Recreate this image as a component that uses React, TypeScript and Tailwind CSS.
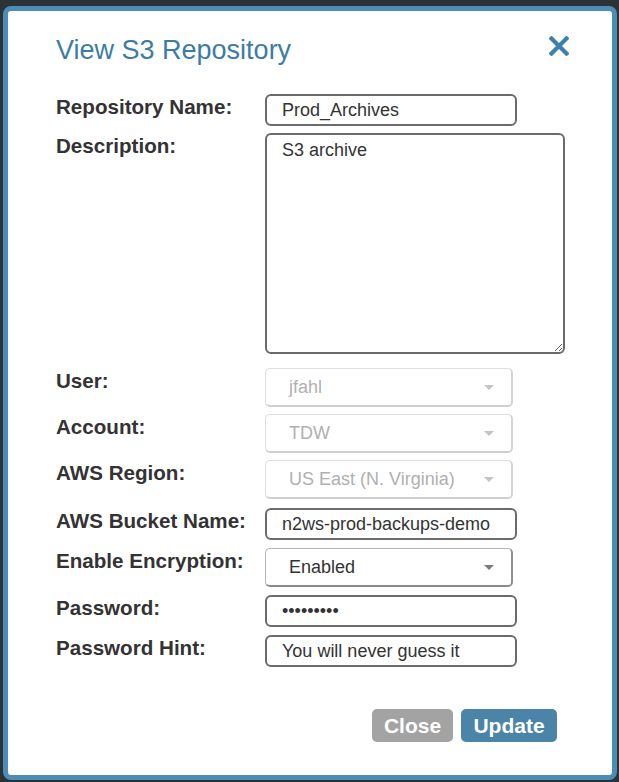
import React from "react";

const font = { fontFamily: '"Liberation Sans", Arial, Helvetica, sans-serif' };

function Caret({ color }: { color: string }) {
  return (
    <svg width="10" height="5" viewBox="0 0 10 5" className="shrink-0">
      <path d="M0 0 L10 0 L5 5 Z" fill={color} />
    </svg>
  );
}

function Row({
  label,
  children,
  className,
}: {
  label: string;
  children: React.ReactNode;
  className?: string;
}) {
  return (
    <div className={"flex items-start " + (className || "")}>
      <div className="w-[209px] shrink-0 pt-[1px] text-[20.6px] leading-[23px] font-bold text-[#333333]">
        {label}
      </div>
      {children}
    </div>
  );
}

function TextBox({ value }: { value: string }) {
  return (
    <div className="w-[252px] h-[32px] border-2 border-[#6b6b6b] rounded-[6px] pl-[15px] flex items-center text-[18px] leading-[20px] text-[#333333] bg-white">
      <span>{value}</span>
    </div>
  );
}

function DisabledSelect({ value }: { value: string }) {
  return (
    <div className="w-[248px] h-[39px] rounded-[5px] border border-[#dedede] border-b-[2px] border-r-[2px] border-b-[#cfcfcf] border-r-[#d4d4d4] pl-[23px] pr-[17px] flex items-center justify-between text-[18px] text-[#b0b0b0] bg-white">
      <span>{value}</span>
      <Caret color="#c4c4c4" />
    </div>
  );
}

export default function App() {
  return (
    <div className="w-[619px] h-[782px] bg-[#2b3336] pt-[6px] pl-[3px] pr-[2px] pb-[2px]" style={font}>
      <div className="h-[774px] border-[5px] border-[#4a8eb7] rounded-[8px] bg-white flex flex-col">
        <div className="flex items-start justify-between pl-[48px] pr-[43px] pt-[24px]">
          <h1 className="text-[27px] leading-[31px] text-[#3b7ca6] font-normal">View S3 Repository</h1>
          <svg width="20" height="20" viewBox="0 0 20 20" className="mt-[1px]">
            <path d="M2.5 2.5 L17.5 17.5 M17.5 2.5 L2.5 17.5" stroke="#3d80ab" strokeWidth="4.2" strokeLinecap="square" />
          </svg>
        </div>

        <div className="pl-[48px] mt-[28px] flex flex-col">
          <Row label="Repository Name:">
            <TextBox value="Prod_Archives" />
          </Row>
          <Row label="Description:" className="mt-[7px]">
            <textarea
              readOnly
              defaultValue="S3 archive"
              className="w-[300px] h-[221px] border-2 border-[#6b6b6b] rounded-[6px] px-[15px] pt-[4px] text-[18px] leading-[22px] text-[#333333] outline-none bg-white"
              style={font}
            />
          </Row>
          <Row label="User:" className="mt-[14px]">
            <DisabledSelect value="jfahl" />
          </Row>
          <Row label="Account:" className="mt-[7px]">
            <DisabledSelect value="TDW" />
          </Row>
          <Row label="AWS Region:" className="mt-[7px]">
            <DisabledSelect value="US East (N. Virginia)" />
          </Row>
          <Row label="AWS Bucket Name:" className="mt-[9px]">
            <TextBox value="n2ws-prod-backups-demo" />
          </Row>
          <Row label="Enable Encryption:" className="mt-[8px]">
            <div className="w-[248px] h-[39px] rounded-[5px] border border-[#b5b5b5] border-b-[2px] border-r-[2px] border-b-[#8a8a8a] border-r-[#8f8f8f] pl-[23px] pr-[17px] flex items-center justify-between text-[18px] text-[#333333] bg-white">
              <span>Enabled</span>
              <Caret color="#7a7a7a" />
            </div>
          </Row>
          <Row label="Password:" className="mt-[8px]">
            <div className="w-[252px] h-[32px] border-2 border-[#6b6b6b] rounded-[6px] pl-[15px] flex items-center text-[18px] leading-[20px] text-[#333333] bg-white">
              <span className="tracking-[0px]">•••••••••</span>
            </div>
          </Row>
          <Row label="Password Hint:" className="mt-[8px]">
            <TextBox value="You will never guess it" />
          </Row>
        </div>

        <div className="flex justify-end gap-[8px] pr-[55px] mt-[42px]">
          <button className="w-[81px] h-[33px] rounded-[5px] bg-[#a3a3a3] text-white font-bold text-[21px] leading-[23px]" style={font}>
            Close
          </button>
          <button className="w-[96px] h-[33px] rounded-[5px] bg-[#4a84a9] text-white font-bold text-[21px] leading-[23px]" style={font}>
            Update
          </button>
        </div>
      </div>
    </div>
  );
}
